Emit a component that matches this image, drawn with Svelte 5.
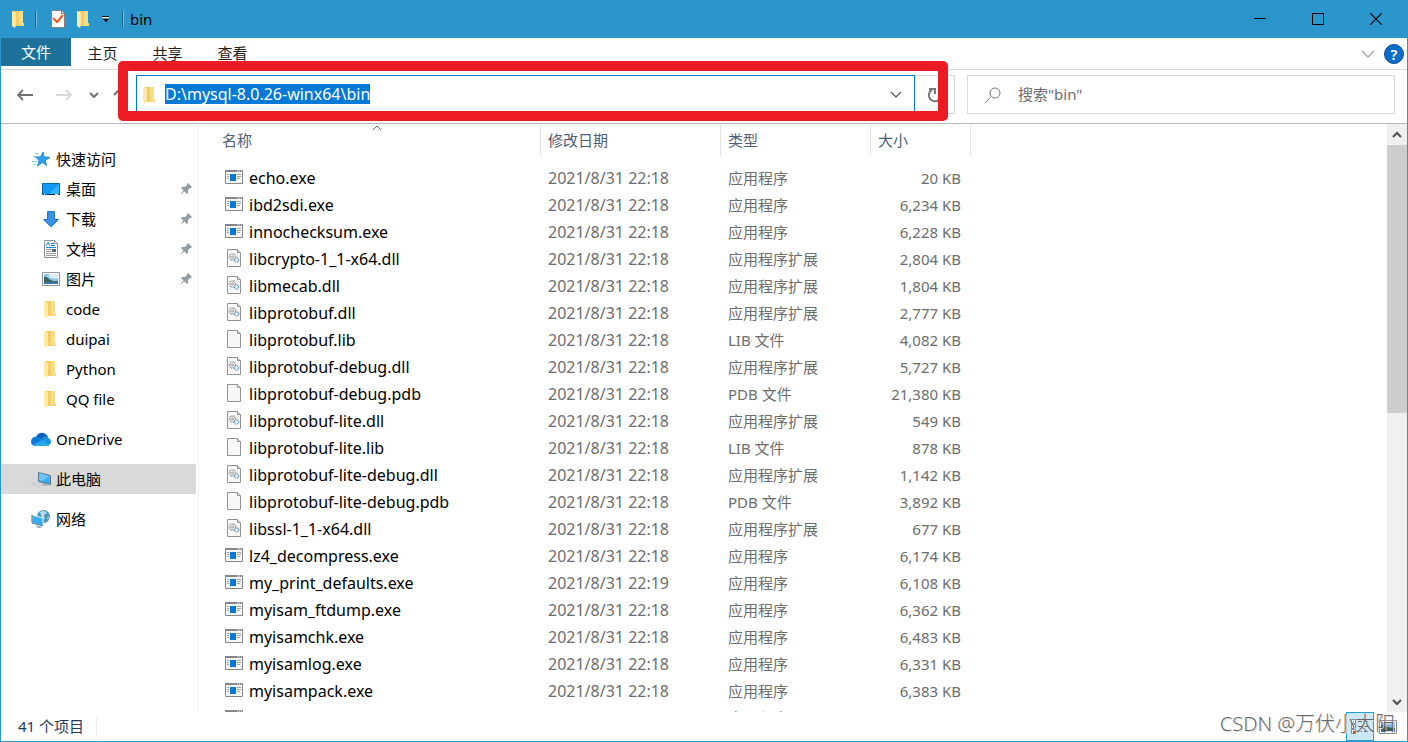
<script lang="ts">
	type FileRow = {
		name: string;
		date: string;
		kind: 'exe' | 'dll' | 'lib' | 'pdb';
		size: string;
	};

	const kinds = {
		exe: '应用程序',
		dll: '应用程序扩展',
		lib: 'LIB 文件',
		pdb: 'PDB 文件'
	};

	const files: FileRow[] = [
		{ name: 'echo.exe', date: '2021/8/31 22:18', kind: 'exe', size: '20 KB' },
		{ name: 'ibd2sdi.exe', date: '2021/8/31 22:18', kind: 'exe', size: '6,234 KB' },
		{ name: 'innochecksum.exe', date: '2021/8/31 22:18', kind: 'exe', size: '6,228 KB' },
		{ name: 'libcrypto-1_1-x64.dll', date: '2021/8/31 22:18', kind: 'dll', size: '2,804 KB' },
		{ name: 'libmecab.dll', date: '2021/8/31 22:18', kind: 'dll', size: '1,804 KB' },
		{ name: 'libprotobuf.dll', date: '2021/8/31 22:18', kind: 'dll', size: '2,777 KB' },
		{ name: 'libprotobuf.lib', date: '2021/8/31 22:18', kind: 'lib', size: '4,082 KB' },
		{ name: 'libprotobuf-debug.dll', date: '2021/8/31 22:18', kind: 'dll', size: '5,727 KB' },
		{ name: 'libprotobuf-debug.pdb', date: '2021/8/31 22:18', kind: 'pdb', size: '21,380 KB' },
		{ name: 'libprotobuf-lite.dll', date: '2021/8/31 22:18', kind: 'dll', size: '549 KB' },
		{ name: 'libprotobuf-lite.lib', date: '2021/8/31 22:18', kind: 'lib', size: '878 KB' },
		{ name: 'libprotobuf-lite-debug.dll', date: '2021/8/31 22:18', kind: 'dll', size: '1,142 KB' },
		{ name: 'libprotobuf-lite-debug.pdb', date: '2021/8/31 22:18', kind: 'pdb', size: '3,892 KB' },
		{ name: 'libssl-1_1-x64.dll', date: '2021/8/31 22:18', kind: 'dll', size: '677 KB' },
		{ name: 'lz4_decompress.exe', date: '2021/8/31 22:18', kind: 'exe', size: '6,174 KB' },
		{ name: 'my_print_defaults.exe', date: '2021/8/31 22:19', kind: 'exe', size: '6,108 KB' },
		{ name: 'myisam_ftdump.exe', date: '2021/8/31 22:18', kind: 'exe', size: '6,362 KB' },
		{ name: 'myisamchk.exe', date: '2021/8/31 22:18', kind: 'exe', size: '6,483 KB' },
		{ name: 'myisamlog.exe', date: '2021/8/31 22:18', kind: 'exe', size: '6,331 KB' },
		{ name: 'myisampack.exe', date: '2021/8/31 22:18', kind: 'exe', size: '6,383 KB' }
	];

	const quick = [
		{ label: '桌面', icon: 'desktop', pinned: true },
		{ label: '下载', icon: 'download', pinned: true },
		{ label: '文档', icon: 'document', pinned: true },
		{ label: '图片', icon: 'picture', pinned: true },
		{ label: 'code', icon: 'folder', pinned: false },
		{ label: 'duipai', icon: 'folder', pinned: false },
		{ label: 'Python', icon: 'folder', pinned: false },
		{ label: 'QQ file', icon: 'folder', pinned: false }
	];

	const roots = [
		{ label: 'OneDrive', icon: 'cloud' },
		{ label: '此电脑', icon: 'computer' },
		{ label: '网络', icon: 'network' }
	];

	let path = $state('D:\\mysql-8.0.26-winx64\\bin');
	let search = $state('');
	let selected = $state('此电脑');
	let view = $state('details');
	let addressInput: HTMLInputElement;

	$effect(() => {
		addressInput.focus();
		addressInput.select();
	});
</script>

{#snippet icon(name: string)}
	<svg class="icon" width="20" height="20" viewBox="0 0 20 20" aria-hidden="true">
		{#if name === 'folder'}
			<path d="M5 2h9v12h1v3H5z" fill="#f3cd67" />
			<path d="M10 2h4v12h1v3h-5z" fill="#f9dc83" />
			<path d="M3 2h1l3 2v12l-1 3-3-2z" fill="#ffe9a6" />
		{:else if name === 'star'}
			<path d="M12 3l1.200 4.800 5.800.7-4.700 2.800 1.200 5.200-4-3-5 3.500 1.500-5.500-3.500-3.500 5-.2z" fill="#2ba3ee" stroke="#1678c0" stroke-width=".8" />
			<path d="M4 4.500h4M2 7.500h5M1 12.500h5M3 15.500h2" stroke="#8bccf4" stroke-width="1" />
		{:else if name === 'desktop'}
			<path d="M1 4h18v12H1z" fill="#129bf4" />
			<path d="M8 15l10-10v10z" fill="#35b2ff" />
			<path d="M1.500 4.500h17v11h-17z" fill="none" stroke="#0b6cb0" />
			<path d="M2 15.500h2M6 15.500h9M16 15.500h2" stroke="#052f55" />
			<path d="M3 15.500h1M14 15.500h3" stroke="#fff" />
		{:else if name === 'download'}
			<path d="M6.500 2.500h7v8h4l-7.500 7.500-7.500-7.500h4z" fill="#3893e4" stroke="#2478c6" />
		{:else if name === 'document'}
			<path d="M3.500 1.500h10l3 3v14h-13z" fill="#fff" stroke="#8d9094" />
			<path d="M13.500 1.500v3h3" fill="#ddd" stroke="#8d9094" />
			<path d="M5 7l2-4 2 4M10 4.500h3M10 6.500h4" stroke="#1a82cc" fill="none" />
			<path d="M5 8.500h10" stroke="#248bd0" />
			<path d="M5 10.500h5M5 12.500h5M5 14.500h10M5 16.500h10" stroke="#999" />
			<path d="M11 10h4v3h-4z" fill="#486b91" />
		{:else if name === 'picture'}
			<path d="M1.500 3.500h17v13h-17z" fill="#fff" stroke="#919599" />
			<path d="M3 5h14v7H3z" fill="#8bc4ef" />
			<path d="M8 5h9v4c-4 2-6-1-9 0z" fill="#d9eaf8" />
			<path d="M3 8c3-1 5 3 9 4h5v1H3z" fill="#37635b" />
			<path d="M3 13h14v2H3z" fill="#3478b2" />
		{:else if name === 'cloud'}
			<path d="M5 8c2-5 9-6 12 0l-5 5z" fill="#0b61b7" />
			<path d="M0 13c0-4 3-6 7-5l6 3-9 5.500C2 17 0 15 0 13z" fill="#0d7bd5" />
			<path d="M11 10c2-3 5-3 6-1 4 1 4 6 0 7.500h-5z" fill="#1591e2" />
			<path d="M2 16l9-5 8 4.500c-1 1-2 1.500-3 1.500H5c-1 0-2 0-3-1z" fill="#28a8ea" />
		{:else if name === 'computer'}
			<path d="M7.500 3.500l12 3v9l-12-3z" fill="#36acf5" stroke="#617482" />
			<path d="M8 4l11 3-8 5-3-1z" fill="#6cc5fb" />
			<path d="M12 14.500l5 1.500-1 1-5-1z" fill="#a9b0b4" />
			<path d="M0 15l3-1 9 3-2 2z" fill="#eceef0" stroke="#b4b8bb" stroke-width=".6" />
			<path d="M2 15l7 2.500" stroke="#b4b8bb" stroke-width=".6" />
		{:else if name === 'network'}
			<circle cx="12.500" cy="7.500" r="6.500" fill="#4d94b9" />
			<path d="M9 3c3-2 6-1 7 1l-3 2 1 4-3-1zM16 9l2-2-1 4z" fill="#b9dced" />
			<path d="M1 6l11 3v8L1 14z" fill="#36acf5" stroke="#e3f2fa" />
			<path d="M1 6v8l11 3" fill="none" stroke="#54758c" />
			<path d="M6 17l5 1-2 1-4-1z" fill="#78909c" />
		{:else if name === 'exe'}
			<path d="M1.500 3.500h17v13h-17z" fill="#f7f7f7" stroke="#83878b" />
			<path d="M1 3h18v2H1z" fill="#83878b" />
			<path d="M13 4h1M15 4h1M17 4h1" stroke="#fff" />
			<path d="M6 7h6v7H6z" fill="#0078d7" />
			<path d="M3 7.500h2M3 9.500h2M3 11.500h2M13 7.500h4M13 9.500h4M13 11.500h3" stroke="#9da0a3" />
		{:else}
			<path d="M3.500 1.500h10l3 3v14h-13z" fill="#f8f8f8" stroke="#909294" />
			<path d="M13.500 1.500v3h3" fill="#ddd" stroke="#909294" />
			{#if name === 'dll'}
				<circle cx="8.500" cy="9" r="3" fill="#fff" stroke="#888c90" stroke-dasharray="1 .6" stroke-width="1.500" />
				<circle cx="8.500" cy="9" r="1" fill="#fff" stroke="#888c90" />
				<circle cx="12.500" cy="12" r="2" fill="#fff" stroke="#6da6d3" stroke-width="1.500" stroke-dasharray="1 .5" />
			{/if}
		{/if}
	</svg>
{/snippet}

{#snippet chevron(d: string, color: string, width: number)}
	<svg width="12" height="12" viewBox="0 0 12 12" aria-hidden="true">
		<path {d} fill="none" stroke={color} stroke-width={width} />
	</svg>
{/snippet}

<div class="window">
	<header class="titlebar">
		<div class="quickbar">
			{@render icon('folder')}
			<span class="divider"></span>
			<button class="tool props" aria-label="属性">
				<svg width="16" height="20" viewBox="0 0 16 20">
					<path d="M1.500 1.500h10l3 3v14h-13z" fill="#fff" stroke="#8c8078" />
					<path d="M11.500 1.500v3h3" fill="#ddd" stroke="#8c8078" />
					<path d="M3 9l4 4 6-7" fill="none" stroke="#ea5a1b" stroke-width="2" />
				</svg>
			</button>
			<button class="tool" aria-label="新建文件夹">{@render icon('folder')}</button>
			<button class="tool more" aria-label="自定义快速访问工具栏">
				<svg width="8" height="8" viewBox="0 0 8 8">
					<path d="M0 1h7v1H0zM1 4h6L4 7z" fill="#000" />
					<path d="M0 2.500h7" stroke="#fff" />
				</svg>
			</button>
			<span class="divider last"></span>
		</div>
		<span class="title">bin</span>
		<div class="controls">
			<button aria-label="最小化">
				<svg width="12" height="12" viewBox="0 0 12 12"><path d="M0 5.500h12" stroke="#000" /></svg>
			</button>
			<button aria-label="最大化">
				<svg width="12" height="12" viewBox="0 0 12 12"><path d="M.5 .5h11v11H.5z" fill="none" stroke="#000" /></svg>
			</button>
			<button aria-label="关闭">
				<svg width="12" height="12" viewBox="0 0 12 12"><path d="M0 0l12 12M12 0L0 12" stroke="#000" stroke-width="1.200" /></svg>
			</button>
		</div>
	</header>

	<nav class="ribbon">
		<button class="tab file">文件</button>
		<button class="tab">主页</button>
		<button class="tab">共享</button>
		<button class="tab">查看</button>
		<div class="ribbon-end">
			<button class="expand" aria-label="展开功能区">
				<svg width="14" height="8" viewBox="0 0 14 8"><path d="M1 1l6 6 6-6" fill="none" stroke="#aaa" stroke-width="1.500" /></svg>
			</button>
			<button class="help" aria-label="帮助">?</button>
		</div>
	</nav>

	<div class="toolbar">
		<div class="history">
			<button aria-label="后退">
				<svg width="16" height="12" viewBox="0 0 16 12"><path d="M16 6H1M6 1L1 6l5 5" fill="none" stroke="#707070" stroke-width="1.800" /></svg>
			</button>
			<button aria-label="前进">
				<svg width="16" height="12" viewBox="0 0 16 12"><path d="M0 6h15M10 1l5 5-5 5" fill="none" stroke="#d8d8d8" stroke-width="1.800" /></svg>
			</button>
			<button class="recent" aria-label="最近浏览的位置">
				<svg width="10" height="6" viewBox="0 0 10 6"><path d="M1 1l4 4 4-4" fill="none" stroke="#707070" stroke-width="2" /></svg>
			</button>
			<button class="up" aria-label="向上">
				<svg width="14" height="16" viewBox="0 0 14 16"><path d="M7 15V2M1 8l6-6 6 6" fill="none" stroke="#707070" stroke-width="2" /></svg>
			</button>
		</div>
		<div class="location">
			<div class="address">
				{@render icon('folder')}
				<input bind:this={addressInput} bind:value={path} aria-label="地址" spellcheck="false" />
				<button aria-label="以前的位置">{@render chevron('M1 3l5 5 5-5', '#555', 1.2)}</button>
			</div>
			<button class="refresh" aria-label="刷新">
				<svg width="16" height="16" viewBox="0 0 16 16">
					<path d="M5 3a6 6 0 1 0 7 1" fill="none" stroke="#777" stroke-width="2" />
					<path d="M2 2h6v5" fill="none" stroke="#777" stroke-width="2" />
				</svg>
			</button>
			<span class="marker"></span>
		</div>
		<label class="search">
			<svg width="16" height="16" viewBox="0 0 16 16" aria-hidden="true">
				<circle cx="10" cy="6" r="5" fill="none" stroke="#777" />
				<path d="M6 9.500L.5 15.500" stroke="#777" />
			</svg>
			<input bind:value={search} placeholder={'搜索"bin"'} aria-label="搜索" />
		</label>
	</div>

	<main class="content">
		<aside class="sidebar">
			<button class="node">{@render icon('star')}<span>快速访问</span></button>
			{#each quick as item}
				<button class="node child" class:selected={selected === item.label} onclick={() => (selected = item.label)}>
					{@render icon(item.icon)}
					<span>{item.label}</span>
					{#if item.pinned}
						<svg class="pin" width="14" height="14" viewBox="0 0 14 14" aria-hidden="true">
							<path d="M9 1l4 4-1 1h-1l-2 2v3l-1 1-2.500-2.500L1 13l3.500-4.500L2 6l1-1h3l2-2V2z" fill="#929ca4" />
						</svg>
					{/if}
				</button>
			{/each}
			{#each roots as item}
				<button class="node root" class:selected={selected === item.label} onclick={() => (selected = item.label)}>
					{@render icon(item.icon)}
					<span>{item.label}</span>
				</button>
			{/each}
		</aside>

		<section class="listing">
			<table>
				<colgroup>
					<col class="col-name" />
					<col class="col-date" />
					<col class="col-type" />
					<col class="col-size" />
				</colgroup>
				<thead>
					<tr>
						<th class="sorted">
							名称
							<svg class="sort" width="10" height="6" viewBox="0 0 10 6" aria-hidden="true">
								<path d="M1 5l4-4 4 4" fill="none" stroke="#666" />
							</svg>
						</th>
						<th>修改日期</th>
						<th>类型</th>
						<th>大小</th>
					</tr>
				</thead>
				<tbody>
					{#each files as file}
						<tr>
							<td class="name"><div>{@render icon(file.kind)}{file.name}</div></td>
							<td class="date">{file.date}</td>
							<td>{kinds[file.kind]}</td>
							<td class="size">{file.size}</td>
						</tr>
					{/each}
					<tr>
						<td class="name"><div>{@render icon('exe')}</div></td>
						<td></td>
						<td>{kinds.exe}</td>
						<td></td>
					</tr>
				</tbody>
			</table>
		</section>

		<div class="scrollbar">
			<button aria-label="向上滚动">{@render chevron('M2 8l4-4 4 4', '#505050', 2)}</button>
			<div class="track"><div class="thumb"></div></div>
			<button aria-label="向下滚动">{@render chevron('M2 4l4 4 4-4', '#505050', 2)}</button>
		</div>
	</main>

	<footer class="statusbar">
		<span class="count">41 个项目</span>
		<div class="views">
			<button class:active={view === 'details'} aria-label="详细信息" onclick={() => (view = 'details')}>
				<svg width="18" height="16" viewBox="0 0 18 16">
					<path d="M.5 .5h4v4h-4zM.5 5.500h4v4h-4zM.5 10.500h4v4h-4z" fill="#fff" stroke="#888" />
					<path d="M2 2h1v1H2z" fill="#2583c8" />
					<path d="M2 7h1v1H2z" fill="#555" />
					<path d="M2 12h2v2H2z" fill="#d23b21" />
					<path d="M7 2.500h4M13 2.500h4M7 7.500h4M13 7.500h4M7 12.500h4M13 12.500h4" stroke="#667" />
				</svg>
			</button>
			<button class:active={view === 'tiles'} aria-label="大图标" onclick={() => (view = 'tiles')}>
				<svg width="18" height="16" viewBox="0 0 18 16">
					<path d="M.5 1.500h17v13H.5z" fill="#fff" stroke="#888" />
					<path d="M2 3h14v7H2z" fill="#80bce8" />
					<path d="M2 6c4 0 6 3 14 3v2H2z" fill="#36605c" />
					<path d="M2 11h14v2H2z" fill="#2870aa" />
				</svg>
			</button>
		</div>
		<span class="watermark">CSDN @万伏小太阳</span>
	</footer>
</div>

<style>
	:global(body) {
		margin: 0;
	}
	.window {
		box-sizing: border-box;
		height: 100vh;
		display: flex;
		flex-direction: column;
		border: 1px solid #2b96cc;
		border-top: 0;
		background: #fff;
		color: #000;
		font: 15px/20px "Noto Sans", "Noto Sans CJK SC", sans-serif;
		overflow: hidden;
	}
	button,
	input {
		box-sizing: border-box;
		margin: 0;
		padding: 0;
		border: 0;
		background: none;
		color: inherit;
		font: inherit;
		outline: none;
	}
	svg {
		display: block;
		flex: none;
	}
	.titlebar {
		display: flex;
		align-items: center;
		flex: none;
		height: 38px;
		background: #2b96cc;
	}
	.quickbar {
		display: flex;
		align-items: center;
		padding-left: 8px;
	}
	.divider {
		width: 1px;
		height: 16px;
		margin-left: 6px;
		background: #1c6389;
		border-right: 1px solid #7dc0e2;
	}
	.divider.last {
		margin-left: 12px;
	}
	.tool {
		display: flex;
		margin-left: 8px;
	}
	.tool.props {
		margin-left: 13px;
	}
	.title {
		margin-left: 6px;
	}
	.controls {
		display: flex;
		margin-left: auto;
		padding-right: 2px;
	}
	.controls button {
		display: grid;
		place-items: center;
		width: 58px;
		height: 38px;
	}
	.ribbon {
		display: flex;
		flex: none;
		height: 31px;
		border-bottom: 1px solid #dadbdc;
	}
	.tab {
		width: 65px;
		height: 28px;
		padding: 2px 2px 0 0;
		color: #222;
	}
	.tab.file {
		width: 70px;
		padding: 0;
		background: #1e7199;
		color: #fff;
	}
	.ribbon-end {
		display: flex;
		align-items: center;
		gap: 9px;
		margin-left: auto;
		padding-right: 3px;
	}
	.help {
		width: 20px;
		height: 20px;
		border: 1px solid #0a4d8c;
		border-radius: 50%;
		background: #0b6ccb;
		color: #fff;
		font-weight: 600;
		line-height: 18px;
	}
	.toolbar {
		display: flex;
		flex: none;
		padding: 5px 12px 9px 16px;
		border-bottom: 1px solid #b9b9b9;
	}
	.toolbar input {
		height: 20px;
		min-width: 0;
		margin-bottom: 2px;
	}
	.history {
		display: flex;
		align-items: center;
		width: 119px;
	}
	.history button {
		margin-right: 23px;
	}
	.history .recent {
		margin-right: 14px;
		margin-left: -6px;
	}
	.history .up {
		margin-right: 0;
	}
	.location {
		position: relative;
		display: flex;
		flex: 1;
		height: 39px;
	}
	.address {
		box-sizing: border-box;
		display: flex;
		align-items: center;
		flex: 1;
		border: 1px solid #0078d7;
		padding: 0 12px 0 3px;
	}
	.address input {
		flex: 1;
		margin-left: 5px;
		font-size: 16px;
	}
	.address input::selection {
		background: rgba(0, 120, 215, 0.99);
		color: #fff;
	}
	.refresh {
		display: flex;
		align-items: center;
		width: 40px;
		padding-left: 12px;
		border: 1px solid #d9d9d9;
		border-left: 0;
	}
	/* red frame drawn round the address bar */
	.marker {
		position: absolute;
		inset: -14px 7px -7px -18px;
		border: 10px solid #ed1c24;
		border-radius: 5px;
		z-index: 2;
		pointer-events: none;
	}
	.search {
		box-sizing: border-box;
		display: flex;
		align-items: center;
		flex: 0 1 428px;
		margin-left: 12px;
		padding-left: 17px;
		border: 1px solid #d9d9d9;
	}
	.search input {
		flex: 1;
		margin-left: 17px;
	}
	.search input::placeholder {
		color: #6d6d6d;
		opacity: 1;
	}
	.content {
		display: flex;
		flex: 1;
		min-height: 0;
	}
	.sidebar {
		box-sizing: border-box;
		width: 198px;
		flex: none;
		padding: 20px 2px 0 0;
		border-right: 1px solid #f0f0f0;
	}
	.node {
		display: flex;
		align-items: center;
		width: 100%;
		height: 30px;
		padding: 0 3px 0 30px;
		text-align: left;
	}
	.node span {
		margin-left: 5px;
	}
	.node.child {
		padding-left: 40px;
	}
	.node.root {
		margin-top: 10px;
	}
	.node.selected {
		background: #d9d9d9;
	}
	.pin {
		margin-left: auto;
	}
	.listing {
		flex: 1;
		min-width: 0;
		overflow: hidden;
	}
	table {
		width: 772px;
		table-layout: fixed;
		border-collapse: separate;
		border-spacing: 0;
	}
	.col-name {
		width: 342px;
	}
	.col-date {
		width: 180px;
	}
	.col-type {
		width: 150px;
	}
	.col-size {
		width: 100px;
	}
	th {
		box-sizing: border-box;
		height: 32px;
		padding: 0 0 0 7px;
		border-right: 1px solid #e5e5e5;
		color: #4c607a;
		font-weight: 400;
		text-align: left;
	}
	th.sorted {
		position: relative;
		padding-left: 23px;
	}
	.sort {
		position: absolute;
		top: 1px;
		left: 50%;
		margin-left: 2px;
	}
	tbody::before {
		content: "";
		display: block;
		height: 8px;
	}
	td {
		height: 27px;
		padding: 0 0 0 7px;
		color: #6d6d6d;
		white-space: nowrap;
	}
	td.name {
		padding-left: 25px;
		color: #000;
		font-size: 16px;
	}
	td.date {
		font-size: 16px;
	}
	.name div {
		display: flex;
		align-items: center;
		gap: 5px;
	}
	.name .icon {
		margin-bottom: 2px;
	}
	td.size {
		padding: 0 10px 0 0;
		text-align: right;
	}
	.scrollbar {
		display: flex;
		flex-direction: column;
		width: 20px;
		background: #f0f0f0;
	}
	.scrollbar button {
		display: grid;
		place-items: center;
		height: 21px;
	}
	.track {
		flex: 1;
	}
	.thumb {
		height: 49%;
		background: #cdcdcd;
	}
	.statusbar {
		position: relative;
		display: flex;
		align-items: center;
		flex: none;
		height: 29px;
		padding: 0 5px 0 17px;
		color: #1e395b;
	}
	.count {
		padding: 0 12px 2px 0;
		border-right: 1px solid #f0f0f0;
	}
	.views {
		display: flex;
		margin-left: auto;
	}
	.views button {
		box-sizing: border-box;
		display: grid;
		place-items: center;
		width: 28px;
		height: 29px;
	}
	.views button.active {
		border: 1px solid #26a0da;
		background: #cbe8f6;
	}
	.watermark {
		position: absolute;
		right: 12px;
		bottom: 4px;
		color: rgba(80, 80, 80, 0.85);
		font-size: 20px;
		font-weight: 300;
		line-height: 26px;
		text-shadow: 1px 1px 0 #ddd;
		pointer-events: none;
	}
</style>
